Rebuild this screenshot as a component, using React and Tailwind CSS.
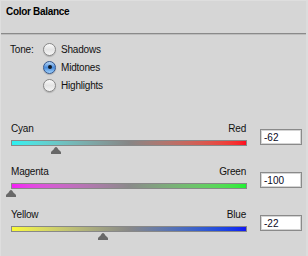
import React from "react";

const tones = ["Shadows", "Midtones", "Highlights"];

const sliders = [
  { left: "Cyan", right: "Red", value: -62, bar: "bg-linear-to-r from-[#26f0f0] via-[#868686] to-[#ff0820]" },
  { left: "Magenta", right: "Green", value: -100, bar: "bg-linear-to-r from-[#f41cf4] via-[#8a8a8a] to-[#1cf032]" },
  { left: "Yellow", right: "Blue", value: -22, bar: "bg-linear-to-r from-[#fafa34] via-[#888888] to-[#1414f4]" },
];

const Radio = ({ checked }) =>
  checked ? (
    <span className="w-[13px] h-[13px] rounded-full border border-[#34568c] bg-linear-to-b from-[#b9d8f6] via-[#4b8ddc] to-[#9fd0fa] flex items-center justify-center shadow-[0_1px_1px_rgba(0,0,0,0.2)]">
      <span className="w-[4px] h-[4px] rounded-full bg-[#111a26]" />
    </span>
  ) : (
    <span className="w-[13px] h-[13px] rounded-full border border-[#878787] bg-linear-to-b from-[#fbfbfb] via-[#e4e4e4] to-[#f6f6f6] shadow-[0_1px_1px_rgba(0,0,0,0.18)]" />
  );

const Thumb = () => (
  <svg width="10" height="7" viewBox="0 0 10 7" className="block">
    <path d="M5 0 C6 0 6.6 1.2 7.4 2.4 L9.6 4.6 Q10 5 10 5.6 V7 H0 V5.6 Q0 5 0.4 4.6 L2.6 2.4 C3.4 1.2 4 0 5 0 Z" fill="#686868" />
  </svg>
);

const Slider = ({ left, right, value, bar }) => {
  const pos = (236 * (value + 100)) / 200;
  return (
    <div className="flex mb-[12px]">
      <div className="w-[236px] ml-[10px]">
        <div className="flex justify-between h-[12px] leading-[12px] text-[10px] tracking-[-0.2px] text-[#111]">
          <span>{left}</span>
          <span className="mr-px">{right}</span>
        </div>
        <div className={`mt-[5px] h-[6px] border border-[#888888] ${bar}`} />
        <div className="relative h-[7px] mt-px">
          <div className="absolute top-0" style={{ left: pos - 5 }}>
            <Thumb />
          </div>
        </div>
      </div>
      <div className="ml-[13px] mt-[6px] w-[42px] h-[16px] bg-white border border-[#8a8a8a] shadow-[inset_0_0_0_1px_#d4d4d4] px-[3px] text-[10px] leading-[15px] text-[#0a0a1e]">
        {value}
      </div>
    </div>
  );
};

export default function App() {
  return (
    <div
      className="w-[308px] h-[256px] bg-[#d6d6d6] border-t border-l border-[#dedede] border-r-2 border-r-[#dcdcdc] overflow-hidden"
      style={{ fontFamily: '"Liberation Sans", Arial, sans-serif' }}
    >
      <div className="h-[32px] pl-[5px] pt-[5px]">
        <div className="text-[10px] leading-[12px] font-bold tracking-[-0.3px] text-black">Color Balance</div>
      </div>
      <div className="h-px bg-[#8a8a8a]" />
      <div className="h-px bg-[#bdbdbd]" />

      <div className="flex mt-[5px] pl-[9px] text-[10px] tracking-[-0.2px] text-[#111]">
        <div className="w-[33px] h-[18px] flex items-center">Tone:</div>
        <div className="flex flex-col">
          {tones.map((t, i) => (
            <div key={t} className="h-[18px] flex items-center gap-[5px]">
              <Radio checked={i === 1} />
              <span>{t}</span>
            </div>
          ))}
        </div>
      </div>

      <div className="mt-[29px]">
        {sliders.map((s) => (
          <Slider key={s.left} {...s} />
        ))}
      </div>
    </div>
  );
}
